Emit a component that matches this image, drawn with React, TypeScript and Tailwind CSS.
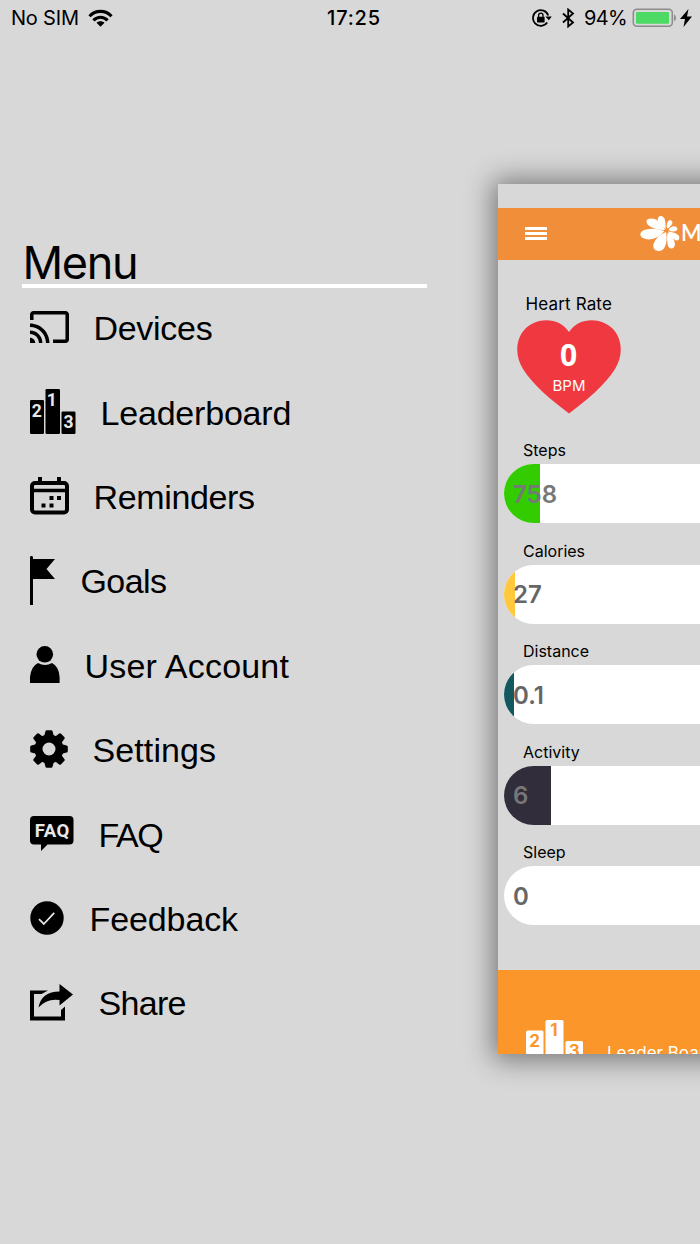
import type { ReactNode } from 'react';

type MenuEntry = { label: string; icon: ReactNode; gap: string; tracking: string };

function Wifi() {
  return (
    <svg className="ml-[9px] h-[19px] w-[25px]" viewBox="0 0 25 19" fill="none" stroke="#000" strokeWidth="3.1">
      <path d="M1.5 7.2C7.5.7 17.5.7 23.5 7.2" />
      <path d="M5.4 11.4C9.5 7.2 15.5 7.2 19.6 11.4" />
      <path d="M12.5 17.8l-4-4c2.2-2 5.8-2 8 0z" fill="#000" stroke="none" />
    </svg>
  );
}

function RotationLock() {
  return (
    <svg className="h-[18px] w-[20px]" viewBox="0 0 20 18" fill="none" stroke="#000" strokeWidth="1.8">
      <path d="M16.2 6.500A7.8 7.8 0 1 0 15.200 13.500" />
      <path d="M13.400 7.4h6.4L16.800 11.2z" fill="#000" stroke="none" />
      <rect x="5" y="7.800" width="7.6" height="5.6" rx=".6" fill="#000" stroke="none" />
      <path d="M6.6 8.4V6.4a2.2 2.2 0 0 1 4.4 0v2" strokeWidth="1.3" />
    </svg>
  );
}

function Bluetooth() {
  return (
    <svg className="ml-[10px] h-[20px] w-[13px]" viewBox="0 0 13 20" fill="none" stroke="#000" strokeWidth="1.8">
      <path d="M1 5.5l10 9-4.800 4V1.5l4.800 4-10 9" />
    </svg>
  );
}

function Battery() {
  return (
    <svg className="ml-[5px] h-[20px] w-[45px]" viewBox="0 0 45 20">
      <rect x="1.3" y="1.3" width="39" height="17" rx="3.5" fill="none" stroke="#8b8b8b" strokeWidth="1.5" />
      <rect x="4" y="4" width="33" height="11.8" rx="1" fill="#4cd964" />
      <path d="M42 6.6q2 1 2 3.4t-2 3.4z" fill="#8b8b8b" />
    </svg>
  );
}

function Cast() {
  return (
    <svg className="h-[32px] w-[39px]" viewBox="1 3 22 18">
      <path d="M21 3H3c-1.1 0-2 .9-2 2v3h2V5h18v14h-7v2h7c1.1 0 2-.9 2-2V5c0-1.1-.9-2-2-2zM1 18v3h3c0-1.66-1.34-3-3-3zm0-4v2c2.76 0 5 2.24 5 5h2c0-3.87-3.13-7-7-7zm0-4v2c4.97 0 9 4.03 9 9h2c0-6.08-4.93-11-11-11z" />
    </svg>
  );
}

function Podium() {
  return (
    <svg className="h-[45px] w-[46px]" viewBox="0 0 46 45">
      <rect x="0" y="11" width="14" height="34" rx="1.2" />
      <rect x="15.5" y="0" width="14.5" height="45" rx="1.2" />
      <rect x="31.5" y="22.5" width="14" height="22.5" rx="1.2" />
      <g fill="#e8e8e8" fontFamily="Roboto" fontWeight="700" fontSize="17.500" textAnchor="middle">
        <text x="6.800" y="27.500">2</text>
        <text x="21.800" y="16.5">1</text>
        <text x="38.5" y="38.500">3</text>
      </g>
    </svg>
  );
}

function PodiumLight() {
  return (
    <svg className="mt-[50px] h-[56px] w-[57px] shrink-0" viewBox="0 0 57 56">
      <g fill="#fff">
        <rect x="0" y="10.500" width="17.500" height="46" rx="1.5" />
        <rect x="19.500" y="0" width="18" height="56" rx="1.5" />
        <rect x="39.500" y="21" width="17.500" height="35" rx="1.5" />
      </g>
      <g fill="#fa962a" fontFamily="Inter" fontWeight="700" fontSize="17" textAnchor="middle">
        <text x="8.700" y="26.500">2</text>
        <text x="28" y="16">1</text>
        <text x="48.300" y="37">3</text>
      </g>
    </svg>
  );
}

function CalendarIcon() {
  return (
    <svg className="h-[38px] w-[39px]" viewBox="0 0 39 38">
      <rect x="2" y="6" width="35" height="29.5" rx="3" fill="none" stroke="#000" strokeWidth="4" />
      <path d="M2 11.7h35v3.6H2zM8 0h4v6H8zM27 0h4v6h-4zM19.5 19h4v4h-4zM27 19h4v4h-4zM11.5 26.5h4v4h-4zM19.5 26.5h4v4h-4z" />
    </svg>
  );
}

function FlagIcon() {
  return (
    <svg className="h-[49px] w-[25px]" viewBox="0 0 25 49">
      <path d="M0 1.2Q0 0 1.5 0T3 1.2V3h22l-8.5 10L25 23H3v26H0z" />
    </svg>
  );
}

function UserIcon() {
  return (
    <svg className="h-[37px] w-[30px]" viewBox="0 0 30 37">
      <circle cx="14.8" cy="8.3" r="8.3" />
      <path d="M0 37V31Q1 20.5 8 17q7 3.8 14 0 7 3.5 7.6 14v6z" />
    </svg>
  );
}

function GearIcon() {
  return (
    <svg className="h-[38px] w-[38px]" viewBox="-19 -19 38 38">
      <circle r="10.5" fill="none" stroke="#000" strokeWidth="8" />
      {[0, 90, 180, 270].map((a) => (
        <path key={a} transform={`rotate(${a})`} d="M-4.800-13L-3.6-17.6Q-3.4-18.8-2.2-18.8H2.2Q3.4-18.8 3.6-17.6L4.800-13z" />
      ))}
      {[45, 135, 225, 315].map((a) => (
        <path key={a} transform={`rotate(${a})`} d="M-4.500-13L-3.800-18.200Q-3.300-19.500-2.200-19.300H2.200Q3.300-19.500 3.800-18.200L4.500-13z" />
      ))}
    </svg>
  );
}

function FaqIcon() {
  return (
    <svg className="h-[35px] w-[44px]" viewBox="0 0 44 35">
      <path d="M4 0h35.500q4 0 4 4v20.500q0 4-4 4H17.500L11 35v-6.500H4q-4 0-4-4V4q0-4 4-4z" />
      <text x="22.200" y="20.500" fill="#e8e8e8" fontFamily="Roboto" fontWeight="700" fontSize="18.500" letterSpacing=".5" textAnchor="middle">
        FAQ
      </text>
    </svg>
  );
}

function CheckIcon() {
  return (
    <svg className="h-[34px] w-[34px]" viewBox="0 0 34 34">
      <circle cx="17" cy="17" r="16.700" />
      <path d="M9 18.200l4.800 4.800L24.200 11.800" fill="none" stroke="#e5e5e5" strokeWidth="1.800" />
    </svg>
  );
}

function ShareIcon() {
  return (
    <svg className="h-[37px] w-[43px]" viewBox="0 0 43 37">
      <path d="M18 6.500L11.500 10H4v22.500h27V26l4-3.500v14H0V6.500z" />
      <path d="M8.500 23.500Q11.500 7.500 29.500 7.500V0L43 10.500 29.500 21.500V16Q17 14 8.500 23.500z" />
    </svg>
  );
}

const entries: MenuEntry[] = [
  { label: 'Devices', icon: <Cast />, gap: 'gap-[25px]', tracking: 'tracking-[-0.3px]' },
  { label: 'Leaderboard', icon: <Podium />, gap: 'gap-[25px]', tracking: 'tracking-[-0.2px]' },
  { label: 'Reminders', icon: <CalendarIcon />, gap: 'gap-[25px]', tracking: 'tracking-[-0.35px]' },
  { label: 'Goals', icon: <FlagIcon />, gap: 'gap-[26px]', tracking: 'tracking-[-0.6px]' },
  { label: 'User Account', icon: <UserIcon />, gap: 'gap-[25px]', tracking: 'tracking-[0.2px]' },
  { label: 'Settings', icon: <GearIcon />, gap: 'gap-[25px]', tracking: 'tracking-[0.1px]' },
  { label: 'FAQ', icon: <FaqIcon />, gap: 'gap-[25px]', tracking: 'tracking-[-1.4px]' },
  { label: 'Feedback', icon: <CheckIcon />, gap: 'gap-[26px]', tracking: 'tracking-[-0.1px]' },
  { label: 'Share', icon: <ShareIcon />, gap: 'gap-[26px]', tracking: 'tracking-[-0.7px]' },
];

const metrics = [
  { label: 'Steps', value: '758', fill: 'w-[36px] bg-[#33cc00]', text: 'text-[#777]' },
  { label: 'Calories', value: '27', fill: 'w-[11px] bg-[#ffc83d]', text: 'text-[#666]' },
  { label: 'Distance', value: '0.1', fill: 'w-[10px] bg-[#14585f]', text: 'text-[#666]' },
  { label: 'Activity', value: '6', fill: 'w-[47px] bg-[#312d3b]', text: 'text-[#777]' },
  { label: 'Sleep', value: '0', fill: 'w-0', text: 'text-[#666]' },
];

function Flower() {
  return (
    <svg className="h-[36px] w-[40px] shrink-0" viewBox="0 0 40 36" fill="#fff">
      <path d="M25.500 13Q20 9 18 5C16.500 0 22-2 24.500 2.500Q26 7 25.500 13z" />
      <path d="M25 14Q14 14 8 9C3.500 3 10 1 16 3.500Q22 7 25 14z" />
      <path d="M24.500 15Q18 23 9 23.500C-2 23-2 15 6 13.500Q15 11.500 24.500 15z" />
      <path d="M26 16Q28 27 23.500 33C19 37 12 35 13.500 28Q16 20 26 16z" />
      <path d="M27.500 16.500Q34 21 35 28C34.500 34 28.500 34 27.500 28Q26.500 22 27.500 16.500z" />
      <path d="M28 15.500Q36 16 39 20C40.500 25 36 26 32.500 22Q29 19 28 15.500z" />
      <path d="M28.500 14Q31 9.500 35.500 10.500C39 12.500 37 15.500 33.500 15.500Q31 15.500 28.500 14z" />
      <path d="M27 12.500Q26 6 29.500 4C33.500 4 33 8 30.500 10Q29 12 27 12.500z" />
    </svg>
  );
}

function StatusBar() {
  return (
    <header className="grid h-[36px] grid-cols-3 items-center font-['Inter'] text-[20px] leading-none text-black">
      <div className="flex items-center pl-[11px]">
        <span className="tracking-[-0.2px]">No SIM</span>
        <Wifi />
      </div>
      <span className="pl-[8px] text-center font-medium tracking-[0.8px]">17:25</span>
      <div className="flex items-center justify-end pr-[8px]">
        <RotationLock />
        <Bluetooth />
        <span className="ml-[9px] tracking-[-0.7px]">94%</span>
        <Battery />
        <svg className="ml-[3px] h-[18px] w-[12px]" viewBox="0 0 12 18">
          <path d="M8.500 0L0 10h5L3.500 18 12 7.500H7z" />
        </svg>
      </div>
    </header>
  );
}

function Dashboard() {
  return (
    <section className="mt-[148px] h-[870px] w-[360px] shrink-0 font-['Inter'] shadow-[0_1px_26px_5px_rgba(0,0,0,0.45)]">
      <div className="flex h-full flex-col overflow-hidden bg-[#d8d8d8]">
        <div className="mt-[24px] flex h-[52px] shrink-0 items-center bg-[#f08e3a] pl-[27px]">
          <div className="flex w-[22px] flex-col gap-[2px] pb-[1px]">
            <i className="h-[3px] bg-white" />
            <i className="h-[3px] bg-white" />
            <i className="h-[3px] bg-white" />
          </div>
          <div className="ml-[93px] flex items-center">
            <Flower />
            <span className="pb-[2px] pl-[1px] font-['Lato'] text-[22px] font-semibold leading-none text-white">MEDIC</span>
          </div>
        </div>
        <h2 className="mt-[34px] pl-[27.500px] text-[17px] leading-[20px] tracking-[0.15px] text-black">Heart Rate</h2>
        <div className="ml-[19px] mt-[6px] grid h-[94px] w-[104px] shrink-0">
          <svg className="col-start-1 row-start-1 h-[94px] w-[104px]" viewBox="0 0 104 94" fill="#ef383f">
            <path d="M52 12C42-3 20-3 8 9C-2 20-2 36 6 49C16 65 34 80 52 93.500C70 80 88 65 98 49C106 36 106 20 96 9C84-3 62-3 52 12z" />
          </svg>
          <div className="col-start-1 row-start-1 flex flex-col items-center pt-[20px] text-white">
            <span className="pr-px font-['Open_Sans'] text-[30px] font-bold leading-[30px]">0</span>
            <span className="mt-[8px] text-[15px] leading-[16px]">BPM</span>
          </div>
        </div>
        <div className="mt-[26px] flex shrink-0 flex-col">
          {metrics.map((m) => (
            <div key={m.label} className="h-[100.500px] pl-[6px]">
              <h3 className="pl-[19px] text-[16px] leading-[20px] text-black">{m.label}</h3>
              <div className="mt-[4px] grid h-[59px] items-center overflow-hidden rounded-[30px] bg-white">
                <div className={`col-start-1 row-start-1 h-full ${m.fill}`} />
                <span className={`col-start-1 row-start-1 pl-[9px] pt-[2px] text-[24px] font-semibold leading-none ${m.text}`}>{m.value}</span>
              </div>
            </div>
          ))}
        </div>
        <div className="mt-[27px] flex h-[160px] shrink-0 items-start bg-[#fa962a] pl-[28px] text-white">
          <PodiumLight />
          <span className="ml-[24px] mt-[72px] whitespace-nowrap text-[17px] leading-[22px]">Leader Board</span>
        </div>
      </div>
    </section>
  );
}

export default function App() {
  return (
    <div className="flex h-[1244px] w-[700px] flex-col overflow-hidden bg-[#d8d8d8]">
      <StatusBar />
      <main className="flex flex-1">
        <nav className="w-[498px] shrink-0 pl-[22px] pt-[198px] text-black">
          <h1 className="h-[50px] pl-[0.500px] font-['Inter'] text-[45px] leading-[57px] tracking-[-1.300px]">Menu</h1>
          <div className="h-[4px] w-[405px] bg-white" />
          <ul className="-mt-[3px]">
            {entries.map((e) => (
              <li key={e.label} className={`flex h-[84.400px] items-center pl-[7.500px] ${e.gap}`}>
                <span className="flex shrink-0">{e.icon}</span>
                <span className={`whitespace-nowrap pt-[2px] font-['Liberation_Sans'] text-[34px] leading-none ${e.tracking}`}>{e.label}</span>
              </li>
            ))}
          </ul>
        </nav>
        <Dashboard />
      </main>
    </div>
  );
}
